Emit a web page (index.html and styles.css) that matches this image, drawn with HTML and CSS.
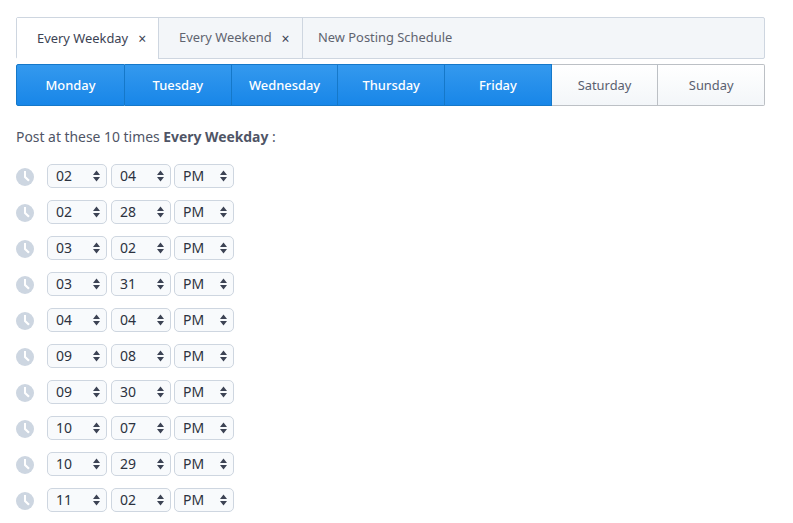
FILE: index.html
```html
<!DOCTYPE html>
<html lang="en">
<head>
<meta charset="utf-8">
<title>Posting Schedule</title>
<link rel="stylesheet" href="styles.css">
</head>
<body>
<div class="page">
  <div class="tabs">
    <div class="tab tab-active"><span class="tab-label">Every Weekday</span><span class="close">×</span></div>
    <div class="tab tab-second"><span class="tab-label">Every Weekend</span><span class="close">×</span></div>
    <div class="tab tab-new"><span class="tab-label">New Posting Schedule</span></div>
  </div>
  <div class="days">
    <div class="day day-on">Monday</div>
    <div class="day day-on">Tuesday</div>
    <div class="day day-on">Wednesday</div>
    <div class="day day-on">Thursday</div>
    <div class="day day-on">Friday</div>
    <div class="day">Saturday</div>
    <div class="day">Sunday</div>
  </div>
  <p class="intro">Post at these 10 times <strong>Every Weekday</strong> :</p>
  <div class="rows" id="rows">
    <div class="row"><svg class="clock" viewBox="0 0 18 18"><circle cx="9" cy="9" r="9"/><path d="M8 3h2v5.4l3.8 3.6-1.6 1.6L8 9.6z"/></svg><div class="sel"><span>02</span><svg class="arrows" viewBox="0 0 7 11"><path d="M3.5 0 7 4.4H0zM3.5 11 0 6.6h7z"/></svg></div><div class="sel"><span>04</span><svg class="arrows" viewBox="0 0 7 11"><path d="M3.5 0 7 4.4H0zM3.5 11 0 6.6h7z"/></svg></div><div class="sel sel-ampm"><span>PM</span><svg class="arrows" viewBox="0 0 7 11"><path d="M3.5 0 7 4.4H0zM3.5 11 0 6.6h7z"/></svg></div></div>
    <div class="row"><svg class="clock" viewBox="0 0 18 18"><circle cx="9" cy="9" r="9"/><path d="M8 3h2v5.4l3.8 3.6-1.6 1.6L8 9.6z"/></svg><div class="sel"><span>02</span><svg class="arrows" viewBox="0 0 7 11"><path d="M3.5 0 7 4.4H0zM3.5 11 0 6.6h7z"/></svg></div><div class="sel"><span>28</span><svg class="arrows" viewBox="0 0 7 11"><path d="M3.5 0 7 4.4H0zM3.5 11 0 6.6h7z"/></svg></div><div class="sel sel-ampm"><span>PM</span><svg class="arrows" viewBox="0 0 7 11"><path d="M3.5 0 7 4.4H0zM3.5 11 0 6.6h7z"/></svg></div></div>
    <div class="row"><svg class="clock" viewBox="0 0 18 18"><circle cx="9" cy="9" r="9"/><path d="M8 3h2v5.4l3.8 3.6-1.6 1.6L8 9.6z"/></svg><div class="sel"><span>03</span><svg class="arrows" viewBox="0 0 7 11"><path d="M3.5 0 7 4.4H0zM3.5 11 0 6.6h7z"/></svg></div><div class="sel"><span>02</span><svg class="arrows" viewBox="0 0 7 11"><path d="M3.5 0 7 4.4H0zM3.5 11 0 6.6h7z"/></svg></div><div class="sel sel-ampm"><span>PM</span><svg class="arrows" viewBox="0 0 7 11"><path d="M3.5 0 7 4.4H0zM3.5 11 0 6.6h7z"/></svg></div></div>
    <div class="row"><svg class="clock" viewBox="0 0 18 18"><circle cx="9" cy="9" r="9"/><path d="M8 3h2v5.4l3.8 3.6-1.6 1.6L8 9.6z"/></svg><div class="sel"><span>03</span><svg class="arrows" viewBox="0 0 7 11"><path d="M3.5 0 7 4.4H0zM3.5 11 0 6.6h7z"/></svg></div><div class="sel"><span>31</span><svg class="arrows" viewBox="0 0 7 11"><path d="M3.5 0 7 4.4H0zM3.5 11 0 6.6h7z"/></svg></div><div class="sel sel-ampm"><span>PM</span><svg class="arrows" viewBox="0 0 7 11"><path d="M3.5 0 7 4.4H0zM3.5 11 0 6.6h7z"/></svg></div></div>
    <div class="row"><svg class="clock" viewBox="0 0 18 18"><circle cx="9" cy="9" r="9"/><path d="M8 3h2v5.4l3.8 3.6-1.6 1.6L8 9.6z"/></svg><div class="sel"><span>04</span><svg class="arrows" viewBox="0 0 7 11"><path d="M3.5 0 7 4.4H0zM3.5 11 0 6.6h7z"/></svg></div><div class="sel"><span>04</span><svg class="arrows" viewBox="0 0 7 11"><path d="M3.5 0 7 4.4H0zM3.5 11 0 6.6h7z"/></svg></div><div class="sel sel-ampm"><span>PM</span><svg class="arrows" viewBox="0 0 7 11"><path d="M3.5 0 7 4.4H0zM3.5 11 0 6.6h7z"/></svg></div></div>
    <div class="row"><svg class="clock" viewBox="0 0 18 18"><circle cx="9" cy="9" r="9"/><path d="M8 3h2v5.4l3.8 3.6-1.6 1.6L8 9.6z"/></svg><div class="sel"><span>09</span><svg class="arrows" viewBox="0 0 7 11"><path d="M3.5 0 7 4.4H0zM3.5 11 0 6.6h7z"/></svg></div><div class="sel"><span>08</span><svg class="arrows" viewBox="0 0 7 11"><path d="M3.5 0 7 4.4H0zM3.5 11 0 6.6h7z"/></svg></div><div class="sel sel-ampm"><span>PM</span><svg class="arrows" viewBox="0 0 7 11"><path d="M3.5 0 7 4.4H0zM3.5 11 0 6.6h7z"/></svg></div></div>
    <div class="row"><svg class="clock" viewBox="0 0 18 18"><circle cx="9" cy="9" r="9"/><path d="M8 3h2v5.4l3.8 3.6-1.6 1.6L8 9.6z"/></svg><div class="sel"><span>09</span><svg class="arrows" viewBox="0 0 7 11"><path d="M3.5 0 7 4.4H0zM3.5 11 0 6.6h7z"/></svg></div><div class="sel"><span>30</span><svg class="arrows" viewBox="0 0 7 11"><path d="M3.5 0 7 4.4H0zM3.5 11 0 6.6h7z"/></svg></div><div class="sel sel-ampm"><span>PM</span><svg class="arrows" viewBox="0 0 7 11"><path d="M3.5 0 7 4.4H0zM3.5 11 0 6.6h7z"/></svg></div></div>
    <div class="row"><svg class="clock" viewBox="0 0 18 18"><circle cx="9" cy="9" r="9"/><path d="M8 3h2v5.4l3.8 3.6-1.6 1.6L8 9.6z"/></svg><div class="sel"><span>10</span><svg class="arrows" viewBox="0 0 7 11"><path d="M3.5 0 7 4.4H0zM3.5 11 0 6.6h7z"/></svg></div><div class="sel"><span>07</span><svg class="arrows" viewBox="0 0 7 11"><path d="M3.5 0 7 4.4H0zM3.5 11 0 6.6h7z"/></svg></div><div class="sel sel-ampm"><span>PM</span><svg class="arrows" viewBox="0 0 7 11"><path d="M3.5 0 7 4.4H0zM3.5 11 0 6.6h7z"/></svg></div></div>
    <div class="row"><svg class="clock" viewBox="0 0 18 18"><circle cx="9" cy="9" r="9"/><path d="M8 3h2v5.4l3.8 3.6-1.6 1.6L8 9.6z"/></svg><div class="sel"><span>10</span><svg class="arrows" viewBox="0 0 7 11"><path d="M3.5 0 7 4.4H0zM3.5 11 0 6.6h7z"/></svg></div><div class="sel"><span>29</span><svg class="arrows" viewBox="0 0 7 11"><path d="M3.5 0 7 4.4H0zM3.5 11 0 6.6h7z"/></svg></div><div class="sel sel-ampm"><span>PM</span><svg class="arrows" viewBox="0 0 7 11"><path d="M3.5 0 7 4.4H0zM3.5 11 0 6.6h7z"/></svg></div></div>
    <div class="row"><svg class="clock" viewBox="0 0 18 18"><circle cx="9" cy="9" r="9"/><path d="M8 3h2v5.4l3.8 3.6-1.6 1.6L8 9.6z"/></svg><div class="sel"><span>11</span><svg class="arrows" viewBox="0 0 7 11"><path d="M3.5 0 7 4.4H0zM3.5 11 0 6.6h7z"/></svg></div><div class="sel"><span>02</span><svg class="arrows" viewBox="0 0 7 11"><path d="M3.5 0 7 4.4H0zM3.5 11 0 6.6h7z"/></svg></div><div class="sel sel-ampm"><span>PM</span><svg class="arrows" viewBox="0 0 7 11"><path d="M3.5 0 7 4.4H0zM3.5 11 0 6.6h7z"/></svg></div></div>
  </div>
</div>
</body>
</html>
```
FILE: styles.css
```css
html, body {
  margin: 0;
  padding: 0;
  height: 523px;
  overflow: hidden;
  background: #fff;
}
body {
  font-family: "Noto Sans", "Open Sans", sans-serif;
  color: #4f5566;
  font-size: 14px;
}
.page {
  width: 749px;
  padding: 17px 0 0 16px;
}
.tabs {
  display: flex;
  height: 42px;
  box-sizing: border-box;
  border: 1px solid #ced6e0;
  border-radius: 2px;
  background: #f3f6f9;
  font-size: 12.9px;
}
.tab {
  display: flex;
  align-items: center;
  box-sizing: border-box;
  color: #5f6470;
  white-space: nowrap;
}
.tab-label {
  padding-bottom: 2px;
}
.tab-active {
  width: 142px;
  padding-left: 20px;
  height: 41px;
  margin: 0 0 -1px 0;
  background: #fff;
  color: #3c4354;
  border-right: 1px solid #ced6e0;
}
.tab-second {
  width: 144px;
  padding-left: 20px;
  border-right: 1px solid #ced6e0;
}
.tab-new {
  padding-left: 15px;
}
.close {
  margin-left: 10px;
  color: #3c4354;
  font-size: 14px;
}
.days {
  display: flex;
  margin-top: 5px;
  height: 42px;
}
.day {
  flex: 1 1 0;
  display: flex;
  align-items: center;
  justify-content: center;
  box-sizing: border-box;
  font-size: 12.9px;
  color: #5a6070;
  background: linear-gradient(#ffffff, #f3f6f9);
  border: 1px solid #bcc0c5;
  border-left-width: 0;
}
.day:last-child {
  border-radius: 0 2px 2px 0;
}
.day-on {
  color: #fff;
  font-weight: 500;
  background: linear-gradient(#3499ee, #1886e8);
  border-color: #1578c9;
}
.day-on:first-child {
  flex: 0 0 109px;
  border-left-width: 1px;
  border-radius: 2px 0 0 2px;
}
.intro {
  margin: 21px 0 0;
  line-height: 20px;
  font-size: 13.9px;
  color: #4f5566;
}
.intro strong {
  font-weight: 700;
}
.rows {
  display: flex;
  flex-direction: column;
  gap: 12px;
  margin-top: 17px;
}
.row {
  display: flex;
  align-items: center;
  height: 24px;
}
.clock {
  width: 18px;
  height: 18px;
  margin: 2px 13px 0 0;
  flex: none;
}
.clock circle {
  fill: #cdd6e1;
}
.clock path {
  fill: #fff;
}
.sel {
  display: flex;
  align-items: center;
  justify-content: space-between;
  box-sizing: border-box;
  width: 60px;
  height: 24px;
  margin-right: 4px;
  padding: 0 6px 0 8px;
  border: 1px solid #ced6e0;
  border-radius: 5px;
  background: #f8fafc;
  color: #2c3240;
  font-size: 14px;
}
.sel span {
  padding-bottom: 2px;
}
.sel-ampm {
  margin-left: -1px;
}
.arrows {
  width: 7px;
  height: 12px;
  fill: #3c4354;
}
```
